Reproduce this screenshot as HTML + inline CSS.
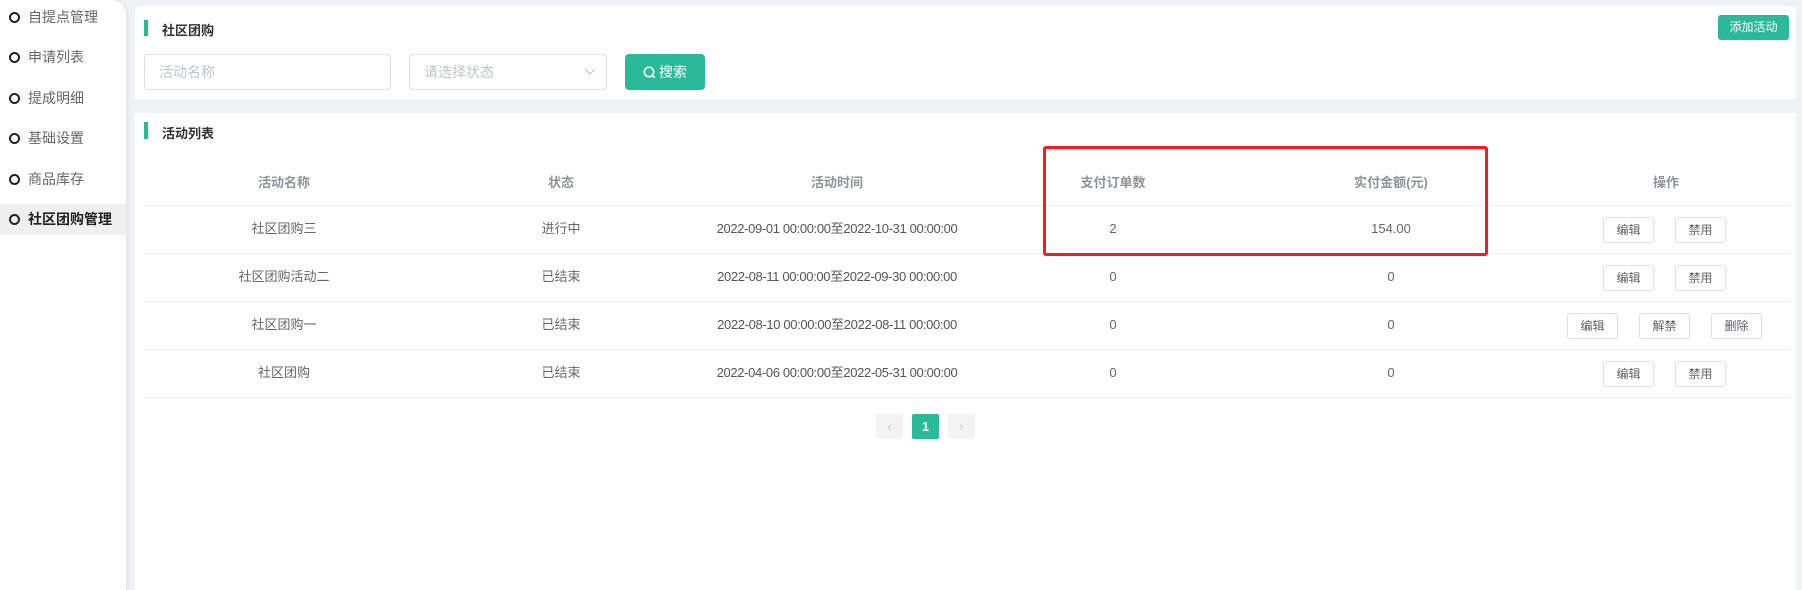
<!DOCTYPE html>
<html><head><meta charset="utf-8"><style>
*{margin:0;padding:0;box-sizing:border-box}
body{width:1802px;height:590px;background:#f0f2f5;font-family:"Liberation Sans","Noto Sans CJK SC",sans-serif;position:relative;overflow:hidden;color:#606266}
.abs{position:absolute}
.side{left:0;top:0;width:126px;height:590px;background:#fff;border-top-right-radius:14px;box-shadow:2px 0 4px rgba(0,0,0,.06)}
.item{position:absolute;left:0;width:126px;height:30px;font-size:14px;color:#666;line-height:30px;padding-left:28px}
.item:before{content:"";position:absolute;left:9px;top:10px;width:11px;height:11px;border:2px solid #222;border-radius:50%;box-sizing:border-box}
.item.act{background:#f0f0f0;color:#222;font-weight:bold;height:31px}
.card{background:#fff}
.bar{width:4px;background:#2bba98}
.ttl{font-size:13px;font-weight:bold;color:#333}
.inp{border:1px solid #dcdfe6;border-radius:4px;height:36px;font-size:14px;color:#c0c4cc;line-height:34px;padding-left:14px}
.btn{background:#2bba98;color:#fff;border-radius:3px;text-align:center}
.cell{position:absolute;width:300px;text-align:center;font-size:13px;color:#666;line-height:20px;height:20px}
.dt{letter-spacing:-0.35px;color:#555}
.hd{color:#909399;font-weight:bold}
.line{position:absolute;left:144px;width:1646px;height:1px;background:#ebeef5}
.ob{position:absolute;width:51px;height:26px;border:1px solid #dcdfe6;border-radius:3px;font-size:12px;color:#606266;text-align:center;line-height:24px;background:#fff}
.pg{position:absolute;top:414px;width:27px;height:25px;border-radius:2px;background:#f4f4f5;color:#c0c4cc;text-align:center;line-height:25px;font-size:13px}
</style></head><body>
<div class="abs side">
<div class="item" style="top:2px">自提点管理</div>
<div class="item" style="top:42px">申请列表</div>
<div class="item" style="top:83px">提成明细</div>
<div class="item" style="top:123px">基础设置</div>
<div class="item" style="top:164px">商品库存</div>
<div class="item act" style="top:204px">社区团购管理</div>
</div>

<div class="abs card" style="left:135px;top:6px;width:1661px;height:93px;border-radius:6px 6px 0 0"></div>
<div class="abs bar" style="left:144px;top:20px;height:16px"></div>
<div class="abs ttl" style="left:162px;top:20px">社区团购</div>
<div class="abs btn" style="left:1718px;top:15px;width:71px;height:25px;font-size:12px;line-height:25px">添加活动</div>
<div class="abs inp" style="left:144px;top:54px;width:247px">活动名称</div>
<div class="abs inp" style="left:409px;top:54px;width:198px">请选择状态
<svg style="position:absolute;right:10px;top:13px" width="12" height="8" viewBox="0 0 12 8"><path d="M1 1l5 5 5-5" fill="none" stroke="#c0c4cc" stroke-width="1.2"/></svg></div>
<div class="abs btn" style="left:625px;top:54px;width:80px;height:36px;font-size:14px;line-height:36px;border-radius:4px">
<svg style="vertical-align:-2px;margin-right:3px" width="13" height="13" viewBox="0 0 13 13"><circle cx="6" cy="6" r="4.7" fill="none" stroke="#fff" stroke-width="1.5"/><path d="M9.5 9.5l2.3 2.3" stroke="#fff" stroke-width="1.5"/></svg>搜索</div>

<div class="abs card" style="left:135px;top:113px;width:1661px;height:477px"></div>
<div class="abs bar" style="left:144px;top:122px;height:17px"></div>
<div class="abs ttl" style="left:162px;top:123px">活动列表</div>

<div class="cell hd" style="left:134px;top:173px">活动名称</div>
<div class="cell hd" style="left:411px;top:173px">状态</div>
<div class="cell hd" style="left:687px;top:173px">活动时间</div>
<div class="cell hd" style="left:963px;top:173px">支付订单数</div>
<div class="cell hd" style="left:1241px;top:173px">实付金额(元)</div>
<div class="cell hd" style="left:1516px;top:173px">操作</div>
<div class="line" style="top:205px"></div>

<div class="cell" style="left:134px;top:219px">社区团购三</div>
<div class="cell" style="left:411px;top:219px">进行中</div>
<div class="cell dt" style="left:687px;top:219px">2022-09-01 00:00:00至2022-10-31 00:00:00</div>
<div class="cell" style="left:963px;top:219px">2</div>
<div class="cell" style="left:1241px;top:219px">154.00</div>
<div class="ob" style="left:1603px;top:217px">编辑</div><div class="ob" style="left:1675px;top:217px">禁用</div>
<div class="line" style="top:253px"></div>

<div class="cell" style="left:134px;top:267px">社区团购活动二</div>
<div class="cell" style="left:411px;top:267px">已结束</div>
<div class="cell dt" style="left:687px;top:267px">2022-08-11 00:00:00至2022-09-30 00:00:00</div>
<div class="cell" style="left:963px;top:267px">0</div>
<div class="cell" style="left:1241px;top:267px">0</div>
<div class="ob" style="left:1603px;top:265px">编辑</div><div class="ob" style="left:1675px;top:265px">禁用</div>
<div class="line" style="top:301px"></div>

<div class="cell" style="left:134px;top:315px">社区团购一</div>
<div class="cell" style="left:411px;top:315px">已结束</div>
<div class="cell dt" style="left:687px;top:315px">2022-08-10 00:00:00至2022-08-11 00:00:00</div>
<div class="cell" style="left:963px;top:315px">0</div>
<div class="cell" style="left:1241px;top:315px">0</div>
<div class="ob" style="left:1567px;top:313px">编辑</div><div class="ob" style="left:1639px;top:313px">解禁</div><div class="ob" style="left:1711px;top:313px">删除</div>
<div class="line" style="top:349px"></div>

<div class="cell" style="left:134px;top:363px">社区团购</div>
<div class="cell" style="left:411px;top:363px">已结束</div>
<div class="cell dt" style="left:687px;top:363px">2022-04-06 00:00:00至2022-05-31 00:00:00</div>
<div class="cell" style="left:963px;top:363px">0</div>
<div class="cell" style="left:1241px;top:363px">0</div>
<div class="ob" style="left:1603px;top:361px">编辑</div><div class="ob" style="left:1675px;top:361px">禁用</div>
<div class="line" style="top:397px"></div>

<div class="pg" style="left:876px">‹</div>
<div class="pg" style="left:912px;background:#2bba98;color:#fff;font-weight:bold">1</div>
<div class="pg" style="left:948px">›</div>

<div class="abs" style="left:1043px;top:146px;width:445px;height:110px;border:3px solid #f21d1d;border-radius:3px"></div>
</body></html>
